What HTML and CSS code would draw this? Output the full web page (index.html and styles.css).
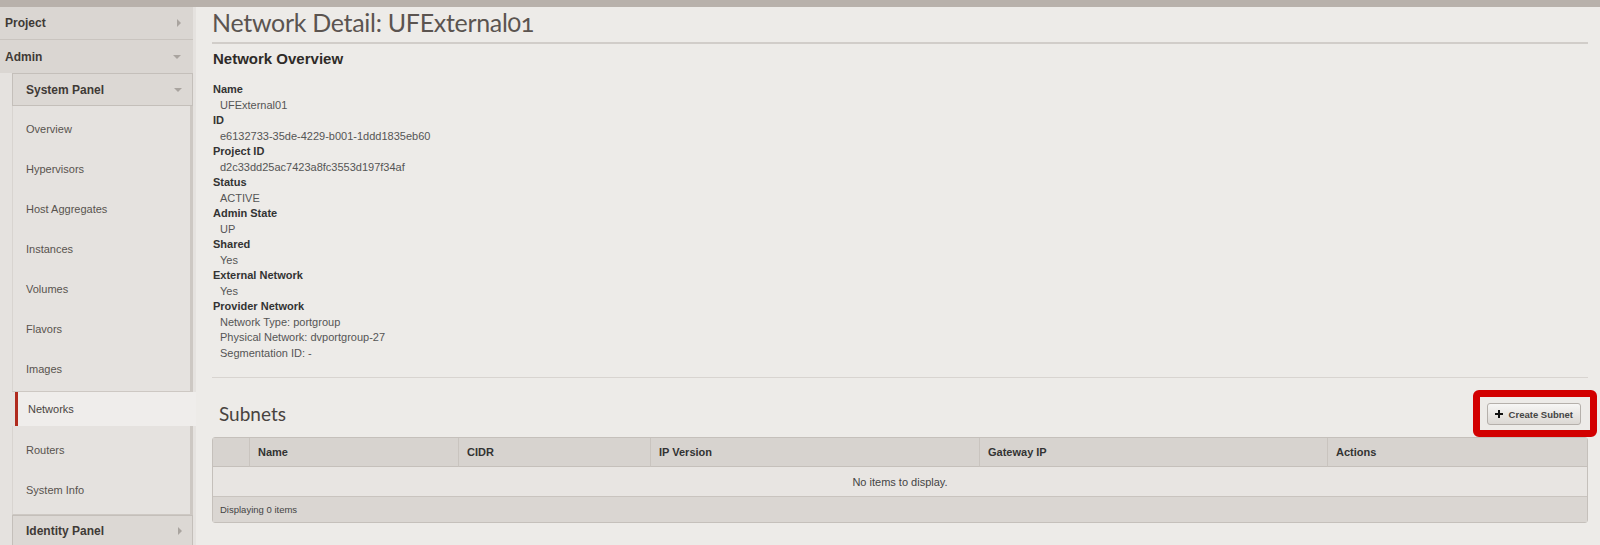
FILE: index.html
```html
<!DOCTYPE html>
<html lang="en">
<head>
    <meta charset="UTF-8">
    <title>Network Detail: UFExternal01</title>
    <link rel="stylesheet" href="styles.css">
</head>
<body>
    <div class="topbar"></div>
    <div class="layout">
        <aside class="sidebar">
            <div class="dash-header">Project <span class="arrow-right"></span></div>
            <div class="dash-header">Admin <span class="arrow-down"></span></div>

            <div class="panel-group">
                <div class="panel-header">System Panel <span class="arrow-down"></span></div>
                <ul class="panel-list">
                    <li>Overview</li>
                    <li>Hypervisors</li>
                    <li>Host Aggregates</li>
                    <li>Instances</li>
                    <li>Volumes</li>
                    <li>Flavors</li>
                    <li>Images</li>
                </ul>
                <div class="panel-active">Networks</div>
                <ul class="panel-list panel-list-last">
                    <li>Routers</li>
                    <li>System Info</li>
                </ul>
                <div class="panel-header panel-closed">Identity Panel <span class="arrow-right"></span></div>
            </div>
        </aside>

        <main class="content">
            <div class="page-header">
                <h1>Network Detail: UFExternal01</h1>
            </div>

            <div class="overview">
                <h3>Network Overview</h3>
                <dl>
                    <dt>Name</dt>
                    <dd>UFExternal01</dd>
                    <dt>ID</dt>
                    <dd>e6132733-35de-4229-b001-1ddd1835eb60</dd>
                    <dt>Project ID</dt>
                    <dd>d2c33dd25ac7423a8fc3553d197f34af</dd>
                    <dt>Status</dt>
                    <dd>ACTIVE</dd>
                    <dt>Admin State</dt>
                    <dd>UP</dd>
                    <dt>Shared</dt>
                    <dd>Yes</dd>
                    <dt>External Network</dt>
                    <dd>Yes</dd>
                    <dt>Provider Network</dt>
                    <dd>Network Type: portgroup</dd>
                    <dd>Physical Network: dvportgroup-27</dd>
                    <dd>Segmentation ID: -</dd>
                </dl>
            </div>

            <div class="table-bar">
                <h3 class="table-title">Subnets</h3>
                <div class="highlight">
                    <button class="btn">
                        <svg width="8" height="8" viewBox="0 0 8 8"><path d="M3 0h2v3h3v2H5v3H3V5H0V3h3z" fill="#111"/></svg>
                        Create Subnet
                    </button>
                </div>
            </div>

            <table class="data-table">
                <thead>
                    <tr>
                        <th class="col-check"></th>
                        <th class="col-name">Name</th>
                        <th class="col-cidr">CIDR</th>
                        <th class="col-ipv">IP Version</th>
                        <th class="col-gw">Gateway IP</th>
                        <th>Actions</th>
                    </tr>
                </thead>
                <tbody>
                    <tr>
                        <td class="empty" colspan="6">No items to display.</td>
                    </tr>
                </tbody>
                <tfoot>
                    <tr>
                        <td colspan="6">Displaying 0 items</td>
                    </tr>
                </tfoot>
            </table>
        </main>
    </div>
</body>
</html>
```

FILE: styles.css
```css
* {
    margin: 0;
    padding: 0;
    box-sizing: border-box;
}

body {
    font-family: "Liberation Sans", Arial, sans-serif;
    background: #edebe8;
    color: #333;
    overflow: hidden;
}

.topbar {
    height: 7px;
    background: #b8b1ab;
}

.layout {
    display: flex;
}

/* sidebar */

.sidebar {
    width: 196px;
    flex-shrink: 0;
    background: #e5e2df;
    height: 538px;
}

.dash-header {
    display: flex;
    align-items: center;
    justify-content: space-between;
    height: 33px;
    margin-right: 3px;
    padding: 0 12px 0 5px;
    background: #dad6d2;
    border-bottom: 1px solid #c9c4bf;
    font-size: 12px;
    font-weight: bold;
    color: #3f3a36;
}

.dash-header + .dash-header {
    border-bottom: none;
}

.arrow-right {
    width: 0;
    height: 0;
    border-top: 4px solid transparent;
    border-bottom: 4px solid transparent;
    border-left: 4px solid #a9a49f;
}

.arrow-down {
    width: 0;
    height: 0;
    border-left: 4px solid transparent;
    border-right: 4px solid transparent;
    border-top: 4px solid #a9a49f;
}

.panel-group {
    margin: 0 3px 0 12px;
}

.panel-header {
    display: flex;
    align-items: center;
    justify-content: space-between;
    height: 33px;
    padding: 0 10px 0 13px;
    background: #dcd8d4;
    border: 1px solid #c4bfba;
    font-size: 12px;
    font-weight: bold;
    color: #3f3a36;
}

.panel-closed {
    height: 30px;
    border-bottom: none;
    padding-right: 10px;
}

.panel-list {
    list-style: none;
    padding: 3px 0 2px;
    border-left: 1px solid #d8d4d0;
    border-right: 3px solid #cdc8c3;
    border-bottom: 1px solid #cdc8c3;
}

.panel-list li {
    height: 40px;
    line-height: 40px;
    padding-left: 13px;
    font-size: 11px;
    color: #58534e;
}

.panel-list-last {
    padding: 4px 0;
}

.panel-active {
    height: 34px;
    line-height: 34px;
    margin: 0 -3px 0 3px;
    padding-left: 10px;
    background: #efedeb;
    border-left: 3px solid #b02b1e;
    font-size: 11px;
    color: #4a4541;
}

/* content */

.content {
    flex: 1;
    padding: 0 12px 0 16px;
}

.page-header {
    height: 37px;
    border-bottom: 2px solid #d1cdc9;
}

.page-header h1 {
    font-family: Lato, "Open Sans", sans-serif;
    font-weight: normal;
    font-size: 25px;
    line-height: 31px;
    color: #5b5450;
    letter-spacing: -0.3px;
    font-variant-numeric: oldstyle-nums;
}

.overview {
    padding: 6px 0 16px;
    border-bottom: 1px solid #d8d4d0;
}

.overview h3 {
    font-size: 15px;
    line-height: 18px;
    color: #2f2b28;
    padding-left: 1px;
    margin-bottom: 14px;
}

.overview dl {
    font-size: 11px;
    line-height: 15.5px;
    padding-left: 1px;
}

.overview dt {
    font-weight: bold;
    color: #333;
}

.overview dd {
    margin-left: 7px;
    color: #555;
}

.table-bar {
    display: flex;
    align-items: center;
    justify-content: space-between;
    margin-top: 12px;
}

.table-title {
    font-family: Lato, "Open Sans", sans-serif;
    font-weight: normal;
    font-size: 19px;
    color: #48433f;
    padding-left: 7px;
}

.highlight {
    border: 7px solid #d20000;
    border-radius: 6px;
    padding: 6px 9px 5px 7px;
    margin-right: -9px;
}

.btn {
    display: flex;
    align-items: center;
    gap: 6px;
    height: 22px;
    padding: 0 7px;
    font-family: "Liberation Sans", Arial, sans-serif;
    font-size: 9.5px;
    font-weight: bold;
    color: #444;
    background: linear-gradient(#f7f6f5, #dcd8d4);
    border: 1px solid #b5b0ab;
    border-radius: 3px;
}

.data-table {
    width: 100%;
    border-collapse: separate;
    border-spacing: 0;
    table-layout: fixed;
    border: 1px solid #c5c0bb;
    border-radius: 3px;
    font-size: 11px;
}

.data-table th {
    height: 29px;
    padding: 0 8px;
    text-align: left;
    background: #d7d3cf;
    color: #333;
    border-bottom: 1px solid #c5c0bb;
    border-left: 1px solid #c9c4bf;
}

.data-table th:first-child {
    border-left: none;
}

.col-check { width: 36px; }
.col-name { width: 209px; }
.col-cidr { width: 192px; }
.col-ipv { width: 329px; }
.col-gw { width: 348px; }

.data-table .empty {
    height: 29px;
    text-align: center;
    background: #e8e5e2;
    color: #444;
}

.data-table tfoot td {
    height: 26px;
    padding-left: 7px;
    background: #dad6d2;
    border-top: 1px solid #c9c4bf;
    font-size: 9.5px;
    color: #444;
}
```
